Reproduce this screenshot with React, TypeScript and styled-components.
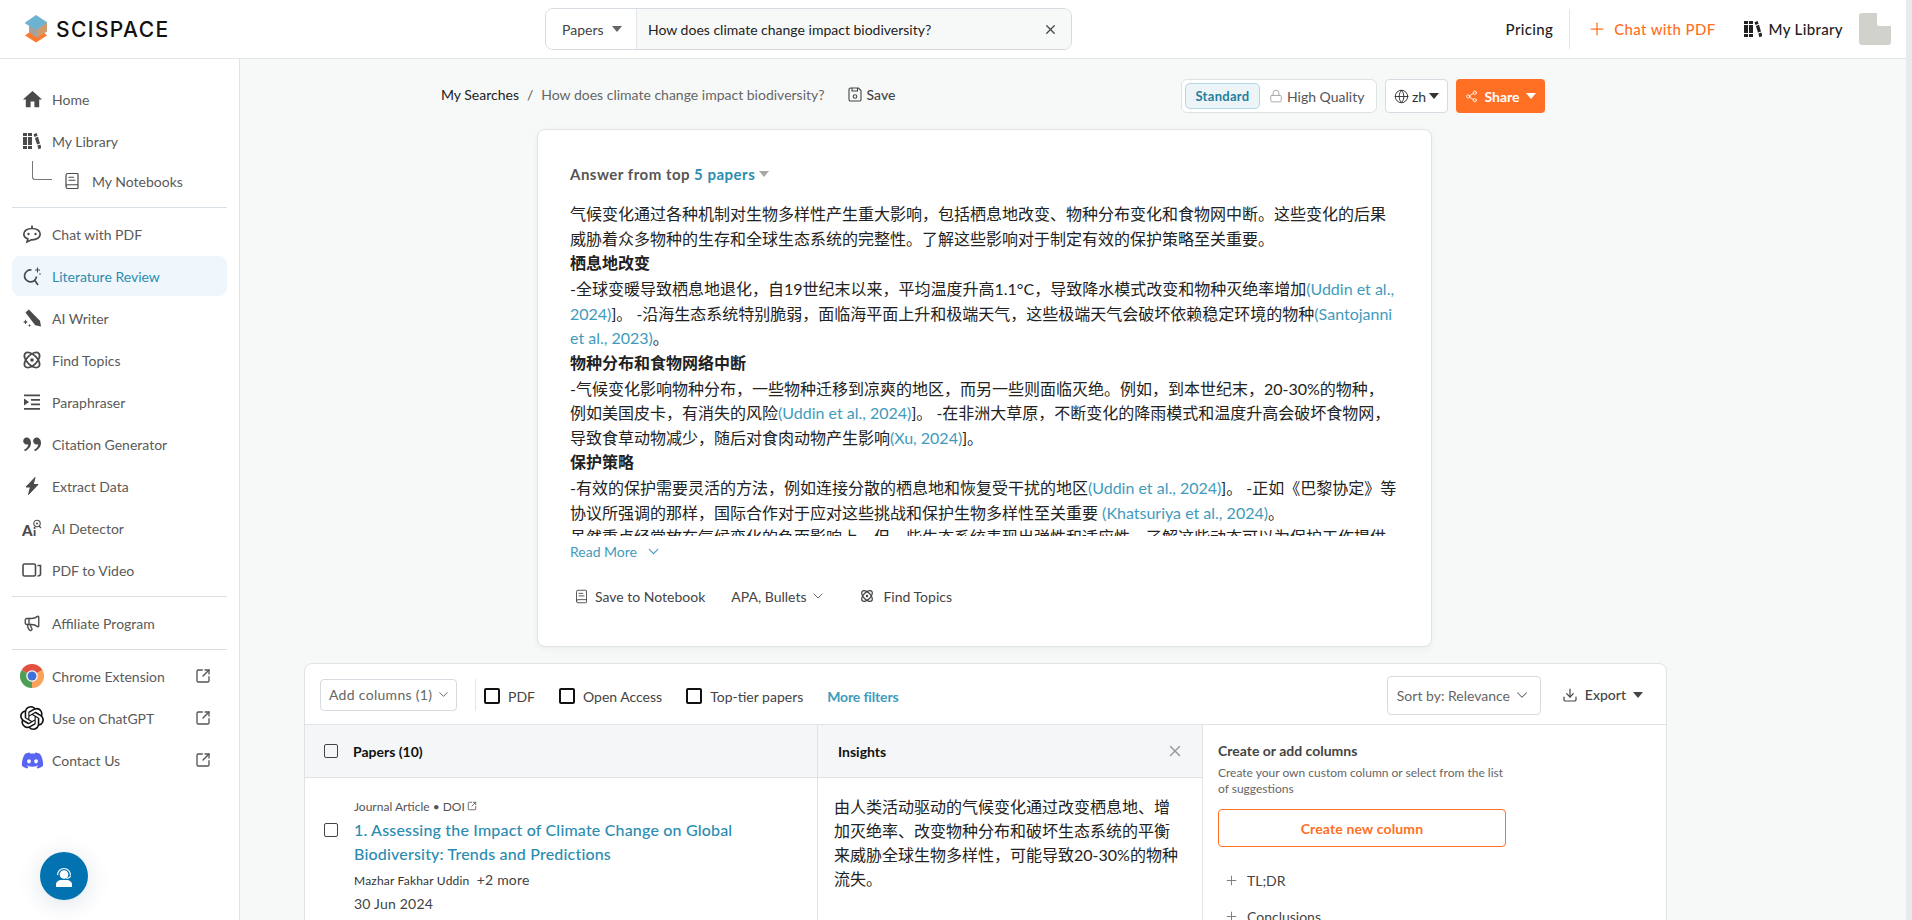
import React from "react";
import styled, { createGlobalStyle } from "styled-components";
import { MdHome } from "react-icons/md";
import { RiDoubleQuotesR } from "react-icons/ri";
import { SiOpenai } from "react-icons/si";
import { FaDiscord } from "react-icons/fa";
import { BookText, ChevronDown, Download, Globe, Lock, Megaphone, Plus, Share2, SquareArrowOutUpRight, X } from "lucide-react";

const FONT = `"Lato", "Noto Sans CJK SC", sans-serif`;

const GlobalStyle = createGlobalStyle`
    html, body {
        margin: 0;
        height: 100%;
        overflow: hidden;
        background: #fff;
    }
    * {
        box-sizing: border-box;
    }
    body {
        font-family: ${FONT};
        font-size: 14px;
        color: #222;
    }
`;

function BooksIcon({ size = 18 }: { size?: number }) {
    return (
        <svg width={size} height={size} viewBox="0 0 18 18" fill="currentColor">
            <path d="M0 1h4v3H0zM0 5h4v8H0zM0 14h4v3H0zM5 1h4v3H5zM5 5h4v8H5zM5 14h4v3H5z" />
            <path d="M10.5 2.2 13.6 1l1 2.8-3.1 1.1zM11.9 5.9 15 4.8l2 6.6-3 1.1zM14.4 13.4l3-1 1 3.8-3 1z" />
        </svg>
    );
}

function ChatIcon() {
    return (
        <svg width="20" height="20" viewBox="0 0 20 20" fill="none" stroke="currentColor" strokeWidth="1.7">
            <path d="M10 4.5c-4.6 0-8.2 2.3-8.2 5.6 0 2.4 1.7 4 4 4.8L5 18l4.300-2.200h.7c4.600 0 8.200-2.300 8.200-5.700S14.600 4.500 10 4.500z" />
            <path d="M10 1.500v3" />
            <circle cx="6.500" cy="10" r="1.200" fill="currentColor" stroke="none" />
            <circle cx="13.500" cy="10" r="1.200" fill="currentColor" stroke="none" />
        </svg>
    );
}

function LiteratureIcon() {
    return (
        <svg width="20" height="20" viewBox="0 0 20 20" fill="none" stroke="currentColor" strokeWidth="1.7">
            <path d="M14.500 10.500a6 6 0 1 1-5-6.500" />
            <path d="m12.500 14 3.500 5" />
            <path d="M15.500 1.500v5M13 4h5" strokeWidth="1.100" />
            <circle cx="18" cy="8" r="0.800" fill="currentColor" stroke="none" />
        </svg>
    );
}

function WriterIcon() {
    return (
        <svg width="20" height="20" viewBox="0 0 20 20" fill="currentColor">
            <path d="M3.500 4.500 6.800 1.500 18 12.800 19 18.500l-5.800-1.200z" />
            <path d="M3.500 11.500l.8 1.700 1.700.8-1.700.8-.8 1.700-.8-1.700-1.700-.8 1.700-.8zM7.500 16l.5 1 1 .5-1 .5-.5 1-.5-1-1-.5 1-.5z" />
        </svg>
    );
}

function AtomIcon({ size = 20 }: { size?: number }) {
    return (
        <svg width={size} height={size} viewBox="0 0 20 20" fill="none" stroke="currentColor" strokeWidth="1.800">
            <ellipse cx="10" cy="10" rx="9.500" ry="5" transform="rotate(45 10 10)" />
            <ellipse cx="10" cy="10" rx="9.500" ry="5" transform="rotate(-45 10 10)" />
            <circle cx="10" cy="10" r="1.800" fill="currentColor" stroke="none" />
        </svg>
    );
}

function IndentIcon() {
    return (
        <svg width="20" height="20" viewBox="0 0 20 20" fill="currentColor">
            <path d="M2 2.500h16v1.800H2zM9 7h9v1.800H9zM9 11.500h9v1.800H9zM2 16h16v1.800H2zM2 6.500 7 10l-5 3.500z" />
        </svg>
    );
}

function BoltIcon() {
    return (
        <svg width="20" height="20" viewBox="0 0 20 20" fill="currentColor" stroke="currentColor" strokeWidth="1" strokeLinejoin="round">
            <path d="M13 1.500 4 11h4.500L6.500 18.500 16 8.500h-4.800z" />
        </svg>
    );
}

function DetectorIcon() {
    return (
        <svg width="20" height="20" viewBox="0 0 20 20" fill="none" stroke="currentColor">
            <text x="0" y="18" fontFamily="Lato, sans-serif" fontWeight="900" fontSize="15" fill="currentColor" stroke="none">
                A
            </text>
            <text x="11" y="18" fontFamily="Lato, sans-serif" fontWeight="900" fontSize="12" fill="currentColor" stroke="none">
                i
            </text>
            <circle cx="15" cy="5.500" r="3.200" strokeWidth="1.100" />
            <circle cx="15" cy="5.500" r="1" fill="currentColor" stroke="none" />
            <path d="m17 8 2 2" strokeWidth="1.100" />
        </svg>
    );
}

function VideoIcon() {
    return (
        <svg width="20" height="20" viewBox="0 0 20 20" fill="none" stroke="currentColor" strokeWidth="1.600">
            <rect x="1" y="4" width="12.500" height="12" rx="1.500" />
            <path d="M15.500 5.500h3v8.500c0 1.300-1 2-3 2" />
        </svg>
    );
}

function ChromeLogo() {
    return (
        <svg width="24" height="24" viewBox="0 0 24 24">
            <path d="M12 12 1.600 6A12 12 0 0 1 22.400 6z" fill="#e2503f" />
            <path d="M12 12 1.600 6A12 12 0 0 0 12 24z" fill="#4f9e56" />
            <path d="M12 12 22.400 6A12 12 0 0 1 12 24z" fill="#f9a25a" />
            <circle cx="12" cy="12" r="5.800" fill="#fff" />
            <circle cx="12" cy="12" r="4.500" fill="#3f6fd8" />
        </svg>
    );
}

function SaveIcon() {
    return (
        <svg width="15" height="15" viewBox="0 0 15 15" fill="none" stroke="currentColor" strokeWidth="1.100">
            <path d="M2.500 1h8l2.500 2.500V12.500a1.500 1.500 0 0 1-1.500 1.500h-9A1.500 1.500 0 0 1 1 12.500v-10A1.500 1.500 0 0 1 2.500 1z" />
            <path d="M4 1v3h5.500V1" />
            <circle cx="7" cy="9.500" r="1.800" />
        </svg>
    );
}

function HeadsetIcon() {
    return (
        <svg width="24" height="24" viewBox="0 0 24 24" fill="none" stroke="#fff">
            <path d="M5.500 11a6.500 6.500 0 0 1 13 0" strokeWidth="1.200" />
            <circle cx="12" cy="10.500" r="4.300" fill="#fff" stroke="none" />
            <path d="M18.500 11.500c0 1.500-1.500 2.500-4 3" strokeWidth="1.200" />
            <path d="M4 23v-2.500c0-2.800 3-4.500 5-4.500h6c2 0 5 1.700 5 4.500V23z" fill="#fff" stroke="none" />
        </svg>
    );
}

function ScispaceLogo() {
    return (
        <svg width="24" height="28" viewBox="0 0 24 28">
            <path d="M1 20.500 7 16h11l5 4.500L12 27.500z" fill="#ff7a2f" />
            <path d="M5 8h18v8.500L13 23 5 17z" fill="#cf9a6e" />
            <path d="M5 8h8v15L5 17z" fill="#a4a29c" />
            <path d="M0.500 8 12 0l11.500 7.500L12 15z" fill="#6db2d0" />
        </svg>
    );
}

function AvatarShape() {
    return (
        <svg width="32" height="32" viewBox="0 0 32 32">
            <path d="M3 0h15v11a2 2 0 0 0 2 2h12v16a3 3 0 0 1-3 3H3a3 3 0 0 1-3-3V3a3 3 0 0 1 3-3z" fill="#d2d2cc" />
        </svg>
    );
}

const mainItems = [
    { label: "Chat with PDF", icon: <ChatIcon /> },
    { label: "Literature Review", icon: <LiteratureIcon />, active: true },
    { label: "AI Writer", icon: <WriterIcon /> },
    { label: "Find Topics", icon: <AtomIcon /> },
    { label: "Paraphraser", icon: <IndentIcon /> },
    { label: "Citation Generator", icon: <RiDoubleQuotesR size={24} /> },
    { label: "Extract Data", icon: <BoltIcon /> },
    { label: "AI Detector", icon: <DetectorIcon /> },
    { label: "PDF to Video", icon: <VideoIcon /> },
];

const externalItems = [
    { label: "Chrome Extension", icon: <ChromeLogo /> },
    { label: "Use on ChatGPT", icon: <SiOpenai size={24} color="#111" /> },
    { label: "Contact Us", icon: <FaDiscord size={23} color="#5865f2" /> },
];

function Sidebar() {
    return (
        <Side>
            <NavItem>
                <NavIcon>
                    <MdHome size={23} />
                </NavIcon>
                Home
            </NavItem>
            <NavGroup>
                <NavItem>
                    <NavIcon>
                        <BooksIcon />
                    </NavIcon>
                    My Library
                </NavItem>
                <SubItem>
                    <Connector />
                    <NavIcon>
                        <BookText size={18} strokeWidth={1.6} />
                    </NavIcon>
                    My Notebooks
                </SubItem>
            </NavGroup>
            <Divider />
            {mainItems.map((item) => (
                <NavItem key={item.label} $active={item.active}>
                    <NavIcon>{item.icon}</NavIcon>
                    {item.label}
                </NavItem>
            ))}
            <Divider />
            <NavItem>
                <NavIcon>
                    <Megaphone size={18} strokeWidth={1.8} />
                </NavIcon>
                Affiliate Program
            </NavItem>
            <Divider />
            {externalItems.map((item) => (
                <NavItem key={item.label}>
                    <NavIcon>{item.icon}</NavIcon>
                    {item.label}
                    <ExternalLink>
                        <SquareArrowOutUpRight size={16} strokeWidth={2} />
                    </ExternalLink>
                </NavItem>
            ))}
            <SupportButton>
                <HeadsetIcon />
            </SupportButton>
        </Side>
    );
}

function TopBar() {
    return (
        <Header>
            <LogoBlock>
                <ScispaceLogo />
                <LogoText>SCISPACE</LogoText>
            </LogoBlock>
            <SearchBox>
                <SearchType>
                    Papers <Caret $color="#666" />
                </SearchType>
                <SearchInput>
                    How does climate change impact biodiversity?
                    <X size={15} color="#444" />
                </SearchInput>
            </SearchBox>
            <HeaderNav>
                <HeaderLink>Pricing</HeaderLink>
                <HeaderDivider />
                <HeaderLink $accent>
                    <Plus size={20} strokeWidth={1.5} />
                    Chat with PDF
                </HeaderLink>
                <HeaderLink>
                    <BooksIcon />
                    My Library
                </HeaderLink>
                <AvatarShape />
            </HeaderNav>
        </Header>
    );
}

function AnswerCard() {
    return (
        <Answer>
            <AnswerTitle>
                Answer from top <AnswerCount>5 papers</AnswerCount>
                <Caret $color="#a8a8a8" />
            </AnswerTitle>
            <AnswerBody>
                <p>
                    气候变化通过各种机制对生物多样性产生重大影响，包括栖息地改变、物种分布变化和食物网中断。这些变化的后果
                    <br />
                    威胁着众多物种的生存和全球生态系统的完整性。了解这些影响对于制定有效的保护策略至关重要。
                </p>
                <h4>栖息地改变</h4>
                <p>
                    -全球变暖导致栖息地退化，自19世纪末以来，平均温度升高1.1°C，导致降水模式改变和物种灭绝率增加<Cite>(Uddin et al.,</Cite>
                    <br />
                    <Cite>2024)</Cite>]。 -沿海生态系统特别脆弱，面临海平面上升和极端天气，这些极端天气会破坏依赖稳定环境的物种<Cite>(Santojanni</Cite>
                    <br />
                    <Cite>et al., 2023)</Cite>。
                </p>
                <h4>物种分布和食物网络中断</h4>
                <p>
                    -气候变化影响物种分布，一些物种迁移到凉爽的地区，而另一些则面临灭绝。例如，到本世纪末，20-30%的物种，
                    <br />
                    例如美国皮卡，有消失的风险<Cite>(Uddin et al., 2024)</Cite>]。 -在非洲大草原，不断变化的降雨模式和温度升高会破坏食物网，
                    <br />
                    导致食草动物减少，随后对食肉动物产生影响<Cite>(Xu, 2024)</Cite>]。
                </p>
                <h4>保护策略</h4>
                <p>
                    -有效的保护需要灵活的方法，例如连接分散的栖息地和恢复受干扰的地区<Cite>(Uddin et al., 2024)</Cite>]。 -正如《巴黎协定》等
                    <br />
                    协议所强调的那样，国际合作对于应对这些挑战和保护生物多样性至关重要 <Cite>(Khatsuriya et al., 2024)</Cite>。
                    <br />
                    虽然重点经常放在气候变化的负面影响上，但一些生态系统表现出弹性和适应性。了解这些动态可以为保护工作提供
                </p>
            </AnswerBody>
            <ReadMore>
                Read More <ChevronDown size={17} strokeWidth={1.6} />
            </ReadMore>
            <AnswerActions>
                <ActionLink>
                    <BookText size={15} strokeWidth={1.4} />
                    Save to Notebook
                </ActionLink>
                <ActionLink $gap={4}>
                    APA, Bullets
                    <ChevronDown size={16} strokeWidth={1.2} />
                </ActionLink>
                <ActionLink $gap={9} $offset={8}>
                    <AtomIcon size={14} />
                    Find Topics
                </ActionLink>
            </AnswerActions>
        </Answer>
    );
}

function PapersTable() {
    return (
        <Table>
            <Toolbar>
                <AddColumns>
                    Add columns (1)
                    <ChevronDown size={15} strokeWidth={1.6} />
                </AddColumns>
                <ToolbarDivider />
                <Filter>
                    <FilterBox />
                    PDF
                </Filter>
                <Filter>
                    <FilterBox />
                    Open Access
                </Filter>
                <Filter>
                    <FilterBox />
                    Top-tier papers
                </Filter>
                <MoreFilters>More filters</MoreFilters>
                <SortBy>
                    Sort by: Relevance
                    <ChevronDown size={18} strokeWidth={1.4} />
                </SortBy>
                <ExportButton>
                    <Download size={16} strokeWidth={1.8} />
                    Export
                    <Caret $color="#444" />
                </ExportButton>
            </Toolbar>
            <Grid>
                <HeaderCell>
                    <RowCheck />
                    <strong>Papers (10)</strong>
                </HeaderCell>
                <HeaderCell $wide>
                    <strong>Insights</strong>
                    <CloseColumn>
                        <X size={18} strokeWidth={2} />
                    </CloseColumn>
                </HeaderCell>
                <ColumnPanel>
                    <PanelTitle>Create or add columns</PanelTitle>
                    <PanelText>
                        Create your own custom column or select from the list
                        <br />
                        of suggestions
                    </PanelText>
                    <CreateColumn>Create new column</CreateColumn>
                    <SuggestionList>
                        <Suggestion>
                            <Plus size={15} strokeWidth={1.5} />
                            TL;DR
                        </Suggestion>
                        <Suggestion>
                            <Plus size={15} strokeWidth={1.5} />
                            Conclusions
                        </Suggestion>
                    </SuggestionList>
                </ColumnPanel>
                <PaperCell>
                    <PaperCheck />
                    <PaperInfo>
                        <PaperMeta>
                            Journal Article • DOI <SquareArrowOutUpRight size={10} />
                        </PaperMeta>
                        <PaperTitle>
                            1. Assessing the Impact of Climate Change on Global
                            <br />
                            Biodiversity: Trends and Predictions
                        </PaperTitle>
                        <PaperAuthors>
                            Mazhar Fakhar Uddin <span>+2 more</span>
                        </PaperAuthors>
                        <PaperDate>30 Jun 2024</PaperDate>
                    </PaperInfo>
                </PaperCell>
                <InsightCell>
                    由人类活动驱动的气候变化通过改变栖息地、增
                    <br />
                    加灭绝率、改变物种分布和破坏生态系统的平衡
                    <br />
                    来威胁全球生物多样性，可能导致20-30%的物种
                    <br />
                    流失。
                </InsightCell>
            </Grid>
        </Table>
    );
}

export default function App() {
    return (
        <>
            <GlobalStyle />
            <Root>
                <Page>
                    <TopBar />
                    <Body>
                        <Sidebar />
                        <Main>
                            <PageBar>
                                <Breadcrumb>
                                    <span>My Searches</span>
                                    <Slash>/</Slash>
                                    <CurrentSearch>How does climate change impact biodiversity?</CurrentSearch>
                                    <SaveLink>
                                        <SaveIcon />
                                        Save
                                    </SaveLink>
                                </Breadcrumb>
                                <PageActions>
                                    <QualityToggle>
                                        <QualityStandard>Standard</QualityStandard>
                                        <QualityHigh>
                                            <Lock size={14} strokeWidth={1.4} />
                                            High Quality
                                        </QualityHigh>
                                    </QualityToggle>
                                    <LangButton>
                                        <Globe size={15} strokeWidth={1.5} />
                                        zh
                                        <Caret $color="#333" />
                                    </LangButton>
                                    <ShareButton>
                                        <Share2 size={13} strokeWidth={1.6} />
                                        Share
                                        <Caret $color="#fff" />
                                    </ShareButton>
                                </PageActions>
                            </PageBar>
                            <AnswerCard />
                            <PapersTable />
                        </Main>
                    </Body>
                </Page>
                <ScrollTrack />
            </Root>
        </>
    );
}

const Root = styled.div`
    display: flex;
    width: 100vw;
    height: 100vh;
    overflow: hidden;
`;

const Page = styled.div`
    flex: 1;
    min-width: 0;
    display: flex;
    flex-direction: column;
`;

const ScrollTrack = styled.div`
    flex: none;
    width: 6px;
    background: #e8ebee;
`;

const Header = styled.header`
    flex: none;
    height: 59px;
    display: flex;
    align-items: center;
    padding: 0 15px 0 24px;
    background: #fff;
    border-bottom: 1px solid #e3e6e8;
`;

const LogoBlock = styled.div`
    flex: none;
    width: 521px;
    display: flex;
    align-items: center;
    gap: 8px;
`;

const LogoText = styled.span`
    font-family: "Inter", sans-serif;
    font-size: 21px;
    font-weight: 500;
    letter-spacing: 1.4px;
    color: #111;
`;

const SearchBox = styled.div`
    flex: none;
    width: 527px;
    height: 42px;
    display: flex;
    border: 1px solid #d5dbe0;
    border-radius: 8px;
    overflow: hidden;
`;

const SearchType = styled.div`
    flex: none;
    width: 91px;
    display: flex;
    align-items: center;
    gap: 8px;
    padding-left: 16px;
    color: #444;
    background: #fff;
    border-right: 1px solid #e3e6e8;
`;

const SearchInput = styled.div`
    flex: 1;
    display: flex;
    align-items: center;
    justify-content: space-between;
    padding: 0 13px 0 11px;
    color: #222;
    background: #f7f9f9;
`;

const HeaderNav = styled.nav`
    margin-left: auto;
    display: flex;
    align-items: center;
`;

const HeaderLink = styled.a<{ $accent?: boolean }>`
    display: flex;
    align-items: center;
    gap: 7px;
    font-size: 15px;
    font-weight: 500;
    letter-spacing: 0.35px;
    margin-right: ${(props) => (props.$accent ? "28px" : "16px")};
    color: ${(props) => (props.$accent ? "#ff7024" : "#222")};
`;

const HeaderDivider = styled.div`
    width: 1px;
    height: 40px;
    margin-right: 17px;
    background: #e3e6e8;
`;

const Caret = styled.span<{ $color: string }>`
    display: inline-block;
    width: 0;
    height: 0;
    border-left: 5px solid transparent;
    border-right: 5px solid transparent;
    border-top: 6px solid ${(props) => props.$color};
`;

const Body = styled.div`
    flex: 1;
    min-height: 0;
    display: flex;
`;

const Side = styled.aside`
    position: relative;
    flex: none;
    width: 240px;
    padding: 20px 12px 0;
    display: flex;
    flex-direction: column;
    gap: 2px;
    background: #fff;
    border-right: 1px solid #dfe3e6;
`;

const NavGroup = styled.div`
    display: flex;
    flex-direction: column;
`;

const NavItem = styled.a<{ $active?: boolean }>`
    flex: none;
    height: 40px;
    display: flex;
    align-items: center;
    gap: 8px;
    padding: 0 16px 0 8px;
    border-radius: 8px;
    font-size: 14px;
    color: ${(props) => (props.$active ? "#2b8cb0" : "#5a5a5a")};
    background: ${(props) => (props.$active ? "#eff7fd" : "transparent")};

    svg {
        color: ${(props) => (props.$active ? "#4a4a4a" : "inherit")};
    }
`;

const SubItem = styled.a`
    height: 40px;
    display: flex;
    align-items: center;
    padding-left: 20px;
    gap: 8px;
    font-size: 14px;
    color: #5a5a5a;
`;

const Connector = styled.span`
    align-self: flex-start;
    flex: none;
    width: 20px;
    height: 19px;
    border-left: 1.5px solid #777;
    border-bottom: 1.5px solid #777;
    border-bottom-left-radius: 3px;
`;

const NavIcon = styled.span`
    flex: none;
    width: 24px;
    height: 24px;
    display: flex;
    align-items: center;
    justify-content: center;
    color: #4a4a4a;
`;

const ExternalLink = styled.span`
    margin-left: auto;
    display: flex;
    color: #555;
`;

const Divider = styled.div`
    flex: none;
    height: 1px;
    margin: 4px 0;
    background: #d9e0e5;
`;

const SupportButton = styled.button`
    position: absolute;
    left: 40px;
    bottom: 20px;
    width: 48px;
    height: 48px;
    display: flex;
    align-items: center;
    justify-content: center;
    padding: 0;
    border: none;
    border-radius: 50%;
    background: #0273b0;
    box-shadow: 0 4px 24px rgba(2, 60, 100, 0.14);
`;

const Main = styled.main`
    flex: 1;
    min-width: 0;
    overflow: hidden;
    padding: 20px 0 0 64px;
    background: #f7f9f9;
`;

const PageBar = styled.div`
    width: 1104px;
    height: 34px;
    margin-left: 137px;
    display: flex;
    align-items: center;
    justify-content: space-between;
`;

const Breadcrumb = styled.div`
    display: flex;
    align-items: center;
    margin-top: -4px;
    font-size: 14px;
    color: #222;
`;

const Slash = styled.span`
    margin: 0 8px;
    color: #555;
`;

const CurrentSearch = styled.span`
    color: #666;
`;

const SaveLink = styled.span`
    display: flex;
    align-items: center;
    gap: 4px;
    margin-left: 23px;
    font-weight: 500;
    color: #444;
`;

const PageActions = styled.div`
    display: flex;
    align-items: stretch;
    gap: 8px;
    height: 34px;
`;

const QualityToggle = styled.div`
    width: 196px;
    display: flex;
    align-items: center;
    padding: 3px;
    background: #fff;
    border: 1px solid #dde2e6;
    border-radius: 6px;
`;

const QualityStandard = styled.div`
    width: 75px;
    height: 26px;
    display: flex;
    align-items: center;
    justify-content: center;
    font-size: 13px;
    font-weight: 700;
    letter-spacing: 0.3px;
    color: #1f7f9f;
    background: #edf4f7;
    border: 1px solid #b3d7e4;
    border-radius: 5px;
`;

const QualityHigh = styled.div`
    display: flex;
    align-items: center;
    gap: 4px;
    margin-left: 9px;
    color: #555;

    svg {
        color: #999;
    }
`;

const LangButton = styled.button`
    width: 63px;
    display: flex;
    align-items: center;
    justify-content: center;
    gap: 3px;
    padding: 0;
    font: inherit;
    color: #333;
    background: #fff;
    border: 1px solid #d5dbe0;
    border-radius: 4px;
`;

const ShareButton = styled.button`
    width: 89px;
    display: flex;
    align-items: center;
    justify-content: center;
    gap: 6px;
    padding: 0;
    font: inherit;
    font-weight: 700;
    color: #fff;
    background: #ff7024;
    border: none;
    border-radius: 4px;
`;

const Answer = styled.section`
    width: 895px;
    height: 518px;
    margin: 16px 0 0 233px;
    padding: 34px 32px 0;
    background: #fff;
    border: 1px solid #dfe3e6;
    border-radius: 8px;
    box-shadow: 0 2px 6px rgba(30, 50, 70, 0.06);
`;

const AnswerTitle = styled.div`
    display: flex;
    align-items: center;
    gap: 4px;
    height: 20px;
    font-size: 15px;
    font-weight: 700;
    letter-spacing: 0.5px;
    color: #555;
`;

const AnswerCount = styled.span`
    color: #2b8cb0;
`;

const AnswerBody = styled.div`
    height: 334px;
    margin-top: 18px;
    overflow: hidden;
    white-space: nowrap;
    font-size: 16px;
    line-height: 24.5px;
    color: #222;

    p {
        margin: 0;
    }

    h4 {
        margin: 0 0 1.5px;
        font-size: 16px;
        font-weight: 700;
        color: #222;
    }
`;

const Cite = styled.span`
    color: #3f9bbd;
`;

const ReadMore = styled.div`
    display: flex;
    align-items: center;
    gap: 8px;
    height: 20px;
    margin-top: 5px;
    font-size: 14px;
    color: #3f9bbd;
`;

const AnswerActions = styled.div`
    display: flex;
    align-items: center;
    gap: 26px;
    height: 20px;
    margin-top: 25px;
    padding-left: 4px;
`;

const ActionLink = styled.span<{ $gap?: number; $offset?: number }>`
    display: flex;
    align-items: center;
    gap: ${(props) => props.$gap ?? 6}px;
    margin-left: ${(props) => props.$offset ?? 0}px;
    font-size: 14px;
    color: #444;
`;

const Table = styled.section`
    width: 1363px;
    margin-top: 16px;
    background: #fff;
    border: 1px solid #dfe3e6;
    border-radius: 8px 8px 0 0;
`;

const Toolbar = styled.div`
    height: 61px;
    display: flex;
    align-items: center;
    padding: 4px 23px 0 15px;
    border-bottom: 1px solid #dfe3e6;
`;

const AddColumns = styled.button`
    width: 137px;
    height: 32px;
    margin-top: -3px;
    display: flex;
    align-items: center;
    justify-content: space-between;
    padding: 0 5px 0 8px;
    font: inherit;
    letter-spacing: 0.3px;
    color: #666;
    background: #fff;
    border: 1px solid #d5dbe0;
    border-radius: 4px;
`;

const ToolbarDivider = styled.div`
    width: 1px;
    height: 32px;
    margin: -3px 8px 0 18px;
    background: #e3e6e8;
`;

const Filter = styled.label`
    display: flex;
    align-items: center;
    gap: 8px;
    margin-right: 24px;
    color: #444;
`;

const FilterBox = styled.span`
    width: 16px;
    height: 16px;
    border: 2px solid #111;
    border-radius: 2px;
`;

const MoreFilters = styled.a`
    font-weight: 700;
    letter-spacing: -0.15px;
    color: #3f9bbd;
`;

const SortBy = styled.div`
    width: 154px;
    height: 39px;
    margin-left: auto;
    margin-top: -2px;
    display: flex;
    align-items: center;
    justify-content: space-between;
    padding: 0 9px;
    white-space: nowrap;
    color: #666;
    background: #fff;
    border: 1px solid #d5dbe0;
    border-radius: 4px;
`;

const ExportButton = styled.div`
    display: flex;
    align-items: center;
    gap: 7px;
    margin: -3px 0 0 21px;
    font-weight: 500;
    color: #444;
`;

const Grid = styled.div`
    display: grid;
    grid-template-columns: 513px 385px 1fr;
    grid-template-rows: 53px auto;
`;

const HeaderCell = styled.div<{ $wide?: boolean }>`
    display: flex;
    align-items: center;
    justify-content: ${(props) => (props.$wide ? "space-between" : "flex-start")};
    gap: 15px;
    padding-left: ${(props) => (props.$wide ? "20px" : "19px")};
    padding-right: 18px;
    background: #f4f6f7;
    border-right: 1px solid #dfe3e6;
    border-bottom: 1px solid #dfe3e6;
    color: #111;
`;

const CloseColumn = styled.span`
    display: flex;
    color: #999;
`;

const RowCheck = styled.span`
    flex: none;
    width: 14px;
    height: 14px;
    border: 1.5px solid #444;
    border-radius: 2px;
`;

const PaperCheck = styled(RowCheck)`
    margin-top: 26px;
`;

const ColumnPanel = styled.div`
    grid-column: 3;
    grid-row: 1 / span 2;
    padding: 17px 0 0 15px;
`;

const PanelTitle = styled.div`
    line-height: 18px;
    font-weight: 700;
    color: #444;
`;

const PanelText = styled.div`
    margin-top: 5px;
    font-size: 12px;
    line-height: 16px;
    color: #666;
`;

const CreateColumn = styled.button`
    display: block;
    width: 288px;
    height: 38px;
    margin-top: 12px;
    font: inherit;
    font-weight: 700;
    letter-spacing: 0.15px;
    color: #ff7024;
    background: #fff;
    border: 1px solid #ff7024;
    border-radius: 4px;
`;

const SuggestionList = styled.div`
    display: flex;
    flex-direction: column;
    gap: 18px;
    margin: 24px 0 0 6px;
`;

const Suggestion = styled.div`
    display: flex;
    align-items: center;
    gap: 8px;
    height: 18px;
    color: #444;

    svg {
        color: #777;
    }
`;

const PaperCell = styled.div`
    display: flex;
    gap: 16px;
    padding: 19px 0 0 19px;
    border-right: 1px solid #dfe3e6;
`;

const PaperInfo = styled.div`
    display: flex;
    flex-direction: column;
`;

const PaperMeta = styled.div`
    display: flex;
    align-items: center;
    gap: 2px;
    height: 18px;
    font-size: 12px;
    color: #555;
`;

const PaperTitle = styled.div`
    margin-top: 3px;
    font-size: 16px;
    font-weight: 500;
    letter-spacing: 0.18px;
    line-height: 24px;
    white-space: nowrap;
    color: #2b8cb0;
`;

const PaperAuthors = styled.div`
    margin-top: 5px;
    font-size: 12px;
    line-height: 18px;
    letter-spacing: 0.2px;
    color: #333;

    span {
        margin-left: 4px;
        font-size: 14px;
        color: #444;
    }
`;

const PaperDate = styled.div`
    margin-top: 5px;
    line-height: 18px;
    letter-spacing: 0.2px;
    color: #444;
`;

const InsightCell = styled.div`
    height: 200px;
    padding: 17px 0 0 16px;
    font-size: 16px;
    line-height: 24px;
    white-space: nowrap;
    color: #222;
    border-right: 1px solid #dfe3e6;
`;
